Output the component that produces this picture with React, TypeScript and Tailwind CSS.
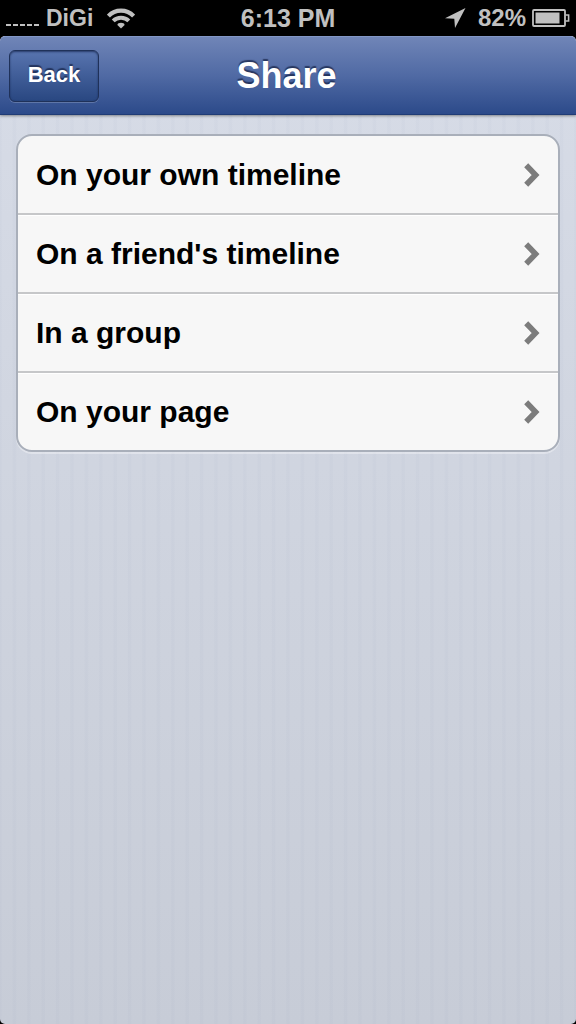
import type { ReactNode } from "react";

const DESTINATIONS = [
  { label: "On your own timeline", href: "#timeline" },
  { label: "On a friend's timeline", href: "#friend" },
  { label: "In a group", href: "#group" },
  { label: "On your page", href: "#page" },
];

function WifiIcon() {
  return (
    <svg viewBox="0 0 28 21" className="h-[21px] w-7" fill="none" stroke="#c0c0c0" aria-hidden="true">
      <path d="M1.4 8C8.2 .9 19.8 .9 26.6 8" strokeWidth="4.2" />
      <path d="M6.2 12.8C10.4 8.6 17.6 8.6 21.8 12.8" strokeWidth="4" />
      <path d="M10.4 17C10.4 14 17.6 14 17.6 17L14 20.6Z" fill="#c0c0c0" stroke="none" />
    </svg>
  );
}

function LocationIcon() {
  return (
    <svg viewBox="0 0 21 20" className="h-5 w-[21px]" fill="#c0c0c0" aria-hidden="true">
      <path d="M20.5 0L0 10.2L9.3 10.8L10 20Z" />
    </svg>
  );
}

function BatteryIcon() {
  return (
    <svg viewBox="0 0 38 18" className="h-[18px] w-[38px]" fill="none" stroke="#c0c0c0" aria-hidden="true">
      <rect x="1" y="1" width="32" height="16" rx="1" strokeWidth="1.8" />
      <path d="M33.5 6H36.6V12H33.5" strokeWidth="1.6" />
      <rect x="3.5" y="3.5" width="24" height="11" fill="#c0c0c0" stroke="none" />
    </svg>
  );
}

function Chevron() {
  return (
    <svg viewBox="0 0 16 24" className="h-6 w-4" fill="none" stroke="#7c7c7c" strokeWidth="5.6" aria-hidden="true">
      <path d="M2.2 2.3L11.6 12L2.2 21.7" />
    </svg>
  );
}

function StatusBar() {
  return (
    <div className="grid h-9 grid-cols-[1fr_auto_1fr] items-center bg-black pr-[6px] pl-[6px] font-bold text-[#c0c0c0]">
      <div className="flex items-center gap-[14px]">
        <div className="flex items-center gap-[7px]">
          {/* Signal strength, no bars */}
          <div className="flex h-4 items-end gap-[2px]">
            <span className="h-[2px] w-[5px] bg-current" />
            <span className="h-[2px] w-[5px] bg-current" />
            <span className="h-[2px] w-[5px] bg-current" />
            <span className="h-[2px] w-[5px] bg-current" />
            <span className="h-[2px] w-[5px] bg-current" />
          </div>
          <span className="text-[23px] leading-9">DiGi</span>
        </div>
        <WifiIcon />
      </div>
      <span className="text-[25px] leading-9">6:13 PM</span>
      <div className="flex items-center justify-end">
        <LocationIcon />
        <span className="pr-[6px] pl-3 text-2xl leading-9">82%</span>
        <BatteryIcon />
      </div>
    </div>
  );
}

function NavBar({ title, children }: { title: string; children: ReactNode }) {
  return (
    <header className="relative z-10 grid h-[79px] grid-cols-[1fr_auto_1fr] items-center rounded-t-[5px] border-t border-b border-t-[#8297c6] border-b-[#203c76] bg-linear-to-b from-[#7085b7] via-[#506aa4] to-[#2c4a8a] pr-3 pl-[9px] shadow-[0_1px_3px_rgba(0,0,0,0.4)]">
      {children}
      <h1 className="text-4xl leading-10 font-bold text-white [text-shadow:0_-2px_1px_rgba(20,32,66,0.7)]">
        {title}
      </h1>
    </header>
  );
}

export default function App() {
  return (
    <div className="flex min-h-screen flex-col bg-black font-['Liberation_Sans',Arial,sans-serif]">
      <StatusBar />
      <div className="flex grow flex-col overflow-hidden rounded-[5px] bg-linear-to-b from-[#d7dce7] to-[#c7ccd7]">
        <NavBar title="Share">
          <button
            type="button"
            className="h-[52px] w-[90px] justify-self-start rounded-md border border-[#1f3159] bg-linear-to-b from-[#5874af] to-[#294781] pb-[2px] text-[22px] font-bold text-white shadow-[0_1px_0_rgba(255,255,255,0.2),inset_0_1px_2px_rgba(20,35,75,0.7)] [text-shadow:0_-2px_1px_rgba(20,32,66,0.7)]"
          >
            Back
          </button>
        </NavBar>
        {/* Pinstripes, forty across */}
        <main className="grow bg-[repeating-linear-gradient(90deg,rgba(70,90,140,0.025)_0%,rgba(70,90,140,0.025)_0.2%,transparent_0.4%,transparent_2.1%,rgba(70,90,140,0.025)_2.3%,rgba(70,90,140,0.025)_2.5%)] px-4 pt-[19px]">
          <ul className="overflow-hidden rounded-2xl border-2 border-[#a9afba] bg-[#f7f7f7] shadow-[0_2px_0_rgba(255,255,255,0.35)]">
            {DESTINATIONS.map(({ label, href }) => (
              <li
                key={href}
                className="border-b-2 border-[#c6c7c9] shadow-[inset_0_1px_0_#ffffff] first:shadow-none last:border-b-0"
              >
                <a
                  href={href}
                  className="flex h-[77px] items-center justify-between px-[18px] text-3xl leading-9 font-bold text-black"
                >
                  {label}
                  <Chevron />
                </a>
              </li>
            ))}
          </ul>
        </main>
      </div>
    </div>
  );
}
